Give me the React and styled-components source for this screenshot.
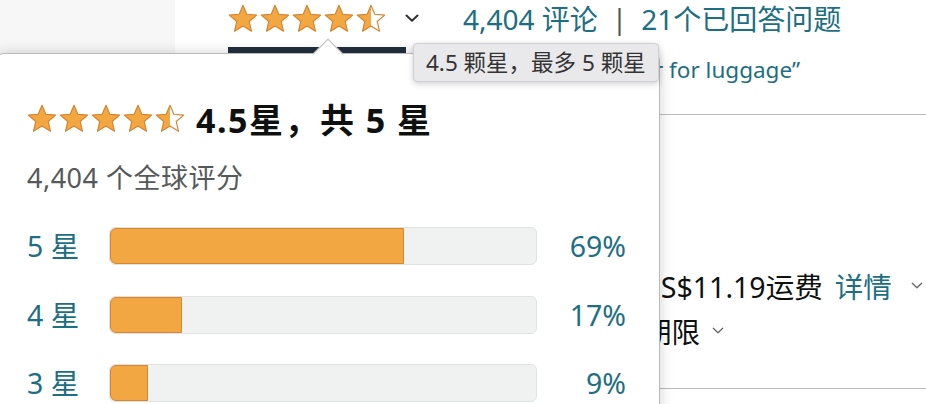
import React, { useId } from 'react'
import styled, { createGlobalStyle } from 'styled-components'

const GlobalStyle = createGlobalStyle`
  html, body {
    margin: 0;
    padding: 0;
    background: #fff;
  }
  body {
    width: 926px;
    height: 404px;
    overflow: hidden;
    font-family: "Noto Sans", "Noto Sans CJK SC", sans-serif;
    color: #0f1111;
  }
`

const LINK = '#1d6f83'

const Page = styled.div`
  position: relative;
  display: flex;
  width: 926px;
  height: 404px;
  overflow: hidden;
`

const ImageCol = styled.div`
  width: 175px;
  flex-shrink: 0;
  background: #f7f7f7;
`

const Main = styled.div`
  flex: 1;
  padding-left: 53px;
  display: flex;
  flex-direction: column;
`

const RatingRow = styled.div`
  display: flex;
  align-items: center;
  height: 36px;
  font-size: 28px;
  white-space: nowrap;
`

const StarRow = styled.div`
  display: flex;
  gap: 2px;
`

const Caret = styled.span`
  display: flex;
  margin-left: ${p => p.offset}px;
  margin-right: ${p => p.after || 0}px;
`

const Link = styled.span`
  color: ${LINK};
  margin-left: ${p => p.gap || 0}px;
`

const Sep = styled.span`
  color: #555;
  margin: 0 14px;
`

const ActiveBar = styled.div`
  width: 178px;
  height: 6px;
  margin-top: 11px;
  background: #232f3e;
`

const ChoiceLine = styled.div`
  display: flex;
  justify-content: flex-end;
  width: 572px;
  height: 36px;
  line-height: 34px;
  font-size: 22.5px;
  color: ${LINK};
  white-space: nowrap;
`

const Rule = styled.hr`
  margin: ${p => p.top}px 0 0;
  border: 0;
  border-top: 1px solid #bbb;
`

const ShipBlock = styled.div`
  display: flex;
  flex-direction: column;
  margin-top: 148px;
  font-size: 28.5px;
  white-space: nowrap;
`

const ShipRow = styled.div`
  display: flex;
  align-items: center;
  height: 45px;
  margin-left: ${p => p.indent}px;
`

const Tooltip = styled.div`
  position: absolute;
  left: 413px;
  top: 43px;
  z-index: 3;
  padding: 0 12px;
  line-height: 37px;
  font-size: 22.5px;
  color: #333;
  background: #e9e9eb;
  border: 1px solid #cfcfd3;
  border-radius: 4px;
  box-shadow: 0 2px 6px rgba(0, 0, 0, 0.18);
  white-space: nowrap;
`

const Popover = styled.div`
  position: absolute;
  left: -4px;
  top: 53px;
  z-index: 2;
  box-sizing: border-box;
  width: 664px;
  height: 400px;
  padding: 44px 33px 0 30px;
  background: #fff;
  border: 1px solid #bbb;
  border-radius: 8px;
  box-shadow: 0 0 14px rgba(0, 0, 0, 0.18);
`

const Arrow = styled.div`
  position: absolute;
  left: 320px;
  top: -11px;
  width: 21px;
  height: 21px;
  background: #fff;
  border-top: 1px solid #bbb;
  border-left: 1px solid #bbb;
  transform: rotate(45deg);
`

const Header = styled.div`
  display: flex;
  align-items: center;
  gap: 11px;
  height: 40px;
`

const Heading = styled.div`
  font-size: 34px;
  font-weight: 700;
  letter-spacing: 1.5px;
  color: #0f1111;
  white-space: nowrap;
`

const Subtitle = styled.div`
  margin-top: 22px;
  line-height: 36px;
  font-size: 27px;
  letter-spacing: 0.5px;
  color: #565959;
`

const Histogram = styled.div`
  display: grid;
  grid-template-columns: 82px 1fr 89px;
  row-gap: 30.5px;
  align-items: center;
  margin-top: 31px;
  font-size: 28.5px;
  line-height: 38px;
  color: ${LINK};
`

const Label = styled.div`
  white-space: nowrap;
`

const Track = styled.div`
  box-sizing: border-box;
  height: 38px;
  background: #f0f2f2;
  border: 1px solid #e0e3e3;
  border-radius: 6px;
  overflow: hidden;
`

const Fill = styled.div`
  box-sizing: border-box;
  height: 100%;
  background: #f2a742;
  border: 1px solid #d98530;
  border-radius: 6px 0 0 6px;
`

const Pct = styled.div`
  text-align: right;
`

const STAR =
  'M15 1.2L18.8 10.3L28.7 11.1L21.2 17.5L23.5 27.2L15 22L6.5 27.2L8.8 17.5L1.3 11.1L11.2 10.3Z'

function Star({ amount }) {
  const raw = useId()
  const id = 'g' + raw.replace(/[^a-zA-Z0-9]/g, '')
  return (
    <svg width="30" height="28.6" viewBox="0 0 30 28.6">
      <defs>
        <linearGradient id={id} x1="0" x2="1" y1="0" y2="0">
          <stop offset={amount} stopColor="#f2a742" />
          <stop offset={amount} stopColor="#fff" />
        </linearGradient>
      </defs>
      <path d={STAR} fill={`url(#${id})`} stroke="#d7812a" strokeWidth="1.1" strokeLinejoin="round" />
    </svg>
  )
}

function Stars({ value }) {
  return (
    <StarRow>
      {[0, 1, 2, 3, 4].map(i => (
        <Star key={i} amount={Math.max(0, Math.min(1, value - i))} />
      ))}
    </StarRow>
  )
}

function Chevron({ color = '#333', size = 14, width = 2 }) {
  return (
    <svg width={size} height={size * 0.6} viewBox="0 0 14 8.4">
      <polyline points="1.5,1.5 7,6.8 12.5,1.5" fill="none" stroke={color} strokeWidth={width} strokeLinecap="round" strokeLinejoin="round" />
    </svg>
  )
}

const rows = [
  { label: '5 星', pct: 69 },
  { label: '4 星', pct: 17 },
  { label: '3 星', pct: 9 },
]

export default function App() {
  return (
    <>
      <GlobalStyle />
      <Page>
        <ImageCol />
        <Main>
          <RatingRow>
            <Stars value={4.5} />
            <Caret offset={19} after={44}>
              <Chevron />
            </Caret>
            <Link>4,404 评论</Link>
            <Sep>|</Sep>
            <Link>21个已回答问题</Link>
          </RatingRow>
          <ActiveBar />
          <ChoiceLine>“packing cubes organizer for luggage”</ChoiceLine>
          <Rule top={25} />
          <ShipBlock>
            <ShipRow indent={412}>
              <span>US$11.19运费</span>
              <Link gap={12}>详情</Link>
              <Caret offset={19}>
                <Chevron color="#666" size={12} width={1.5} />
              </Caret>
            </ShipRow>
            <ShipRow indent={358}>
              <span>退货期限</span>
              <Caret offset={12}>
                <Chevron color="#666" size={12} width={1.5} />
              </Caret>
            </ShipRow>
          </ShipBlock>
          <Rule top={35} />
        </Main>

        <Tooltip>4.5 颗星，最多 5 颗星</Tooltip>

        <Popover>
          <Arrow />
          <Header>
            <Stars value={4.5} />
            <Heading>4.5星，共 5 星</Heading>
          </Header>
          <Subtitle>4,404 个全球评分</Subtitle>
          <Histogram>
            {rows.map(r => (
              <React.Fragment key={r.label}>
                <Label>{r.label}</Label>
                <Track>
                  <Fill style={{ width: `${r.pct}%` }} />
                </Track>
                <Pct>{r.pct}%</Pct>
              </React.Fragment>
            ))}
          </Histogram>
        </Popover>
      </Page>
    </>
  )
}
